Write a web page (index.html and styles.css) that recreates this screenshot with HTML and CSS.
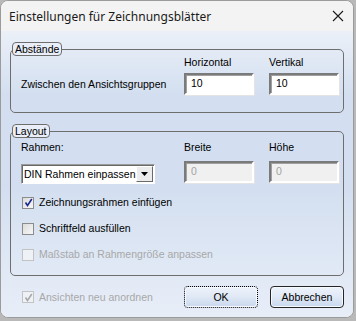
FILE: index.html
```html
<!DOCTYPE html>
<html lang="de">
<head>
<meta charset="utf-8">
<title>Einstellungen für Zeichnungsblätter</title>
<link rel="stylesheet" href="styles.css">
</head>
<body>

<div class="dialog">
  <div class="titlebar">
    <span class="title">Einstellungen für Zeichnungsblätter</span>
    <svg class="close" width="12" height="12" viewBox="0 0 12 12">
      <path d="M1 1L11 11M11 1L1 11" stroke="#1b1b1b" stroke-width="1.1" fill="none"/>
    </svg>
  </div>

  <div class="client">
    <fieldset class="group spacing">
      <legend>Abstände</legend>
      <div class="spacing-grid">
        <span></span>
        <span class="colhead">Horizontal</span>
        <span class="colhead">Vertikal</span>
        <span class="rowlabel">Zwischen den Ansichtsgruppen</span>
        <input class="field" value="10">
        <input class="field" value="10">
      </div>
    </fieldset>

    <fieldset class="group layout">
      <legend>Layout</legend>
      <div class="layout-grid">
        <span class="colhead">Rahmen:</span>
        <span class="colhead">Breite</span>
        <span class="colhead">Höhe</span>
        <div class="combo">
          <span class="combo-text">DIN Rahmen einpassen</span>
          <span class="combo-btn"><svg width="7" height="4" viewBox="0 0 7 4"><path d="M0 0H7L3.5 4Z" fill="#000"/></svg></span>
        </div>
        <input class="field" value="0" disabled>
        <input class="field" value="0" disabled>
      </div>

      <div class="checks">
        <label class="check">
          <span class="box"><svg width="9" height="9" viewBox="0 0 9 9"><path d="M1.5 4.5L3.5 7.5L7.8 1" stroke="#1d2a94" stroke-width="1.6" fill="none"/></svg></span>
          Zeichnungsrahmen einfügen
        </label>
        <label class="check">
          <span class="box"></span>
          Schriftfeld ausfüllen
        </label>
        <label class="check disabled">
          <span class="box"></span>
          Maßstab an Rahmengröße anpassen
        </label>
      </div>
    </fieldset>

    <div class="footer">
      <label class="check disabled">
        <span class="box"><svg width="9" height="9" viewBox="0 0 9 9"><path d="M1.5 4.5L3.5 7.5L7.8 1" stroke="#a9a9a9" stroke-width="1.6" fill="none"/></svg></span>
        Ansichten neu anordnen
      </label>
      <button class="btn focused">OK</button>
      <button class="btn">Abbrechen</button>
    </div>
  </div>
</div>

</body>
</html>
```

FILE: styles.css
```css
body {
  margin: 0;
  background: #b9b9b9;
  font-family: "Liberation Sans", Arial, sans-serif;
  font-size: 10.5px;
  color: #000;
}

.dialog {
  width: 354px;
  height: 318px;
  box-sizing: border-box;
  border: 1px solid #9b9b9b;
  border-radius: 8px;
  overflow: hidden;
  display: flex;
  flex-direction: column;
  background: #f3f3f3;
}

.titlebar {
  height: 30px;
  display: flex;
  align-items: center;
  justify-content: space-between;
  padding: 0 8px 0 8px;
  background: #f3f3f3;
}

.title {
  font-family: "Noto Sans", "Open Sans", sans-serif;
  font-size: 12px;
  color: #1a1a1a;
  margin-top: 1px;
}

.close {
  margin-right: 1px;
  margin-top: -1px;
}

.client {
  flex: 1;
  padding: 11px 9px 0 9px;
  background: linear-gradient(#ebf0f8 0, #d3dff0 22%, #d3dff0 55%, #e8eef8 100%);
}

/* group boxes */

.group {
  margin: 0;
  padding: 0;
  border: 1px solid #6e6e6e;
  border-radius: 5px;
}

.group legend {
  margin-left: 1px;
  padding: 0 2px;
  line-height: 12px;
  border: 1px solid #6e6e6e;
  border-radius: 4px;
  background: #e9eef8;
}

.layout {
  margin-top: 11px;
}

.spacing-grid,
.layout-grid {
  display: grid;
  grid-template-columns: 1fr 70px 70px;
  column-gap: 15px;
  align-items: start;
  padding: 0 4px 0 10px;
}

.spacing-grid {
  row-gap: 4px;
  padding-bottom: 17px;
}

.layout-grid {
  padding-top: 3px;
  row-gap: 7px;
}

.colhead {
  line-height: 13px;
}

.rowlabel {
  align-self: center;
  line-height: 13px;
  white-space: nowrap;
}

.field {
  width: 70px;
  height: 22px;
  box-sizing: border-box;
  margin: 0;
  padding: 0 0 2px 5px;
  border: 2px solid;
  border-color: #7a7a7a #fff #fff #7a7a7a;
  box-shadow: inset 1px 1px 0 #a0a0a0, 1px 1px 0 #e4e4e4;
  background: #fff;
  font-family: "Liberation Sans", Arial, sans-serif;
  font-size: 10.5px;
  color: #000;
  outline: none;
}

.field:disabled {
  background: #f0f0f0;
  color: #a3a3a3;
}

.combo {
  width: 134px;
  height: 20px;
  box-sizing: border-box;
  margin-top: 3px;
  display: flex;
  align-items: stretch;
  border: 1px solid;
  border-color: #9a9a9a #fff #fff #9a9a9a;
  box-shadow: inset 1px 1px 0 #6a6a6a;
  background: #fff;
}

.combo-text {
  flex: 1;
  padding: 3px 0 0 2px;
  line-height: 13px;
  white-space: nowrap;
  overflow: hidden;
}

.combo-btn {
  width: 17px;
  margin: 1px 1px 1px 0;
  display: flex;
  align-items: center;
  justify-content: center;
  box-sizing: border-box;
  border: 1px solid;
  border-color: #fff #6a6a6a #6a6a6a #fff;
  background: #ececec;
}

/* checkboxes */

.checks {
  display: flex;
  flex-direction: column;
  gap: 13px;
  padding: 12px 0 14px 11px;
}

.check {
  display: flex;
  align-items: center;
  gap: 5px;
  line-height: 13px;
  height: 13px;
}

.box {
  width: 12px;
  height: 12px;
  box-sizing: border-box;
  display: flex;
  align-items: center;
  justify-content: center;
  border: 1px solid #8c8c8c;
  background: linear-gradient(135deg, #dcdcdc, #f7f7f7);
}

.check.disabled {
  color: #a8a8a8;
}

.check.disabled .box {
  border-color: #c3c3c3;
  background: #eef1f6;
}

/* footer */

.footer {
  display: grid;
  grid-template-columns: 1fr 74px 74px;
  column-gap: 12px;
  align-items: center;
  padding: 10px 0 0 12px;
}

.btn {
  height: 22px;
  margin: 0;
  padding: 0;
  box-sizing: border-box;
  border: 1px solid #262626;
  border-radius: 4px;
  background: linear-gradient(#eef3fb 0, #dfe8f5 50%, #c9d8ee 100%);
  box-shadow: inset 0 0 0 1px #f6f9fd;
  font-family: "Liberation Sans", Arial, sans-serif;
  font-size: 10.5px;
  color: #000;
}

.btn.focused {
  border: 1px dotted #000;
}
```
